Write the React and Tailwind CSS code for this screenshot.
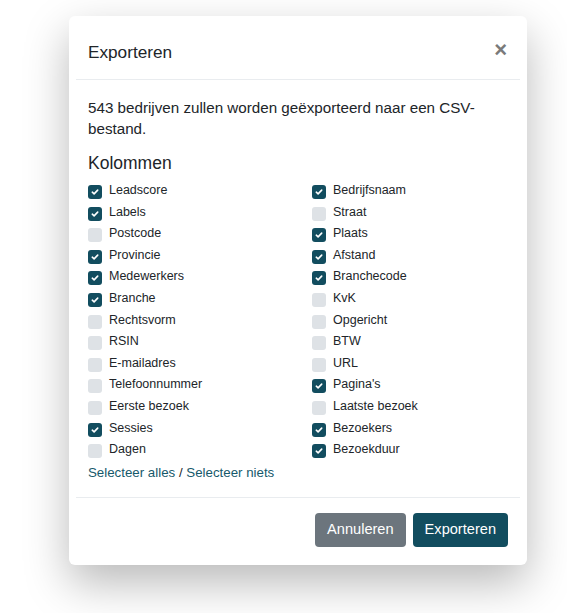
import React from "react";

const left = [
  ["Leadscore", true],
  ["Labels", true],
  ["Postcode", false],
  ["Provincie", true],
  ["Medewerkers", true],
  ["Branche", true],
  ["Rechtsvorm", false],
  ["RSIN", false],
  ["E-mailadres", false],
  ["Telefoonnummer", false],
  ["Eerste bezoek", false],
  ["Sessies", true],
  ["Dagen", false],
];
const right = [
  ["Bedrijfsnaam", true],
  ["Straat", false],
  ["Plaats", true],
  ["Afstand", true],
  ["Branchecode", true],
  ["KvK", false],
  ["Opgericht", false],
  ["BTW", false],
  ["URL", false],
  ["Pagina's", true],
  ["Laatste bezoek", false],
  ["Bezoekers", true],
  ["Bezoekduur", true],
];

function Row({ label, checked }) {
  return (
    <div className="flex items-start h-[21.6px]">
      <div
        className={
          "mt-[4px] w-[14px] h-[14px] rounded-[3px] flex items-center justify-center shrink-0 " +
          (checked ? "bg-[#124d5f]" : "bg-[#dee2e6]")
        }
      >
        {checked && (
          <svg width="8" height="8" viewBox="0 0 8 8">
            <path d="M1.3 4.2 L3.1 5.9 L6.7 2.1" stroke="#fff" strokeWidth="1.6" fill="none" strokeLinecap="round" strokeLinejoin="round" />
          </svg>
        )}
      </div>
      <span className="ml-[7px] text-[12.5px] leading-[19px] text-[#212529]">{label}</span>
    </div>
  );
}

export default function App() {
  return (
    <div
      className="w-[567px] h-[613px] bg-white pt-[16px] pl-[69px]"
      style={{ fontFamily: "'Liberation Sans', Arial, sans-serif" }}
    >
      <div className="w-[458px] h-[549px] bg-white rounded-[6px] shadow-[0_18px_45px_rgba(0,0,0,0.28)] flex flex-col">
        <div className="flex items-center justify-between h-[63px] pl-[19px] pr-[20px]">
          <h5 className="text-[17.2px] text-[#212529] leading-[22px] pt-[8px]">Exporteren</h5>
          <span className="text-[22px] font-bold text-[#7a7a7a] leading-none pt-[4px]">×</span>
        </div>
        <div className="mx-[7px] h-px bg-[#e9ecef]" />
        <div className="px-[19px] pt-[17px]">
          <p className="text-[15.2px] leading-[21px] text-[#212529]">
            543 bedrijven zullen worden geëxporteerd naar een CSV-bestand.
          </p>
          <h5 className="text-[17.5px] leading-[24px] text-[#212529] mt-[12px]">Kolommen</h5>
          <div className="grid grid-cols-[224px_1fr] mt-[6px]">
            <div>
              {left.map(([l, c]) => (
                <Row key={l} label={l} checked={c} />
              ))}
            </div>
            <div>
              {right.map(([l, c]) => (
                <Row key={l} label={l} checked={c} />
              ))}
            </div>
          </div>
          <div className="text-[13.3px] leading-[20px] mt-[1px] text-[#212529]">
            <span className="text-[#16596b]">Selecteer alles</span> /{" "}
            <span className="text-[#16596b]">Selecteer niets</span>
          </div>
        </div>
        <div className="mx-[7px] h-px bg-[#e9ecef] mt-[14px]" />
        <div className="flex justify-end gap-[7px] pr-[19px] pt-[15px]">
          <button className="h-[34px] px-[12px] rounded-[4px] bg-[#6c757d] text-white text-[14.6px]">
            Annuleren
          </button>
          <button className="h-[34px] px-[12px] rounded-[4px] bg-[#124d5f] text-white text-[14.6px]">
            Exporteren
          </button>
        </div>
      </div>
    </div>
  );
}
